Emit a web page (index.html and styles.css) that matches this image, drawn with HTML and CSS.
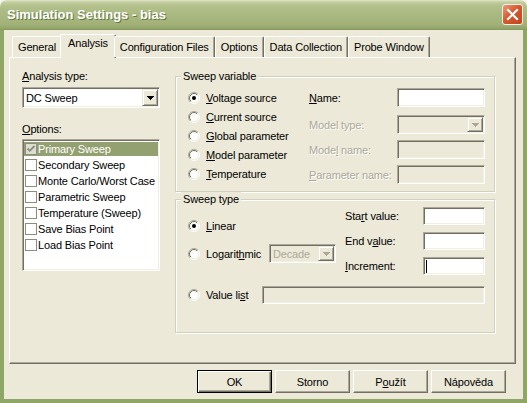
FILE: index.html
```html
<!DOCTYPE html>
<html>
<head>
<meta charset="utf-8">
<title>Simulation Settings - bias</title>
<link rel="stylesheet" href="styles.css">
</head>
<body>
<svg class="defs" width="0" height="0" aria-hidden="true">
  <defs>
    <linearGradient id="rOuter" x1="0" y1="0" x2="1" y2="1">
      <stop offset="0.5" stop-color="#aca899"/>
      <stop offset="0.5" stop-color="#ffffff"/>
    </linearGradient>
    <linearGradient id="rInner" x1="0" y1="0" x2="1" y2="1">
      <stop offset="0.5" stop-color="#716f64"/>
      <stop offset="0.5" stop-color="#f1efe2"/>
    </linearGradient>
  </defs>
</svg>
<div class="window">
  <div class="titlebar">
    <span class="title">Simulation Settings - bias</span>
    <span class="close"><svg width="13" height="13" viewBox="0 0 13 13"><path d="M2 2L11 11M11 2L2 11" stroke="#fff" stroke-width="2.2" stroke-linecap="square"/></svg></span>
  </div>
  <div class="frame">
    <div class="client">
      <div class="tabs">
        <span class="tab">General</span>
        <span class="tab active">Analysis</span>
        <span class="tab">Configuration Files</span>
        <span class="tab">Options</span>
        <span class="tab">Data Collection</span>
        <span class="tab">Probe Window</span>
      </div>
      <div class="panel">
        <div class="left">
          <div class="lbl"><u>A</u>nalysis type:</div>
          <div class="combo big">
            <span class="combo-text">DC Sweep</span>
            <span class="dd"><svg width="7" height="4" viewBox="0 0 7 4"><path d="M0 0h7v1h-1v1h-1v1h-1v1h-1v-1h-1v-1h-1v-1h-1z" fill="#000"/></svg></span>
          </div>
          <div class="lbl opt"><u>O</u>ptions:</div>
          <div class="list">
            <div class="item sel"><div class="inner"><span class="cb checked"><svg width="10" height="10" viewBox="0 0 10 10"><path d="M1.5 4.5L3.8 6.8L8.5 2" fill="none" stroke="#8d8b80" stroke-width="1.8"/></svg></span>Primary Sweep</div></div>
            <div class="item"><div class="inner"><span class="cb"></span>Secondary Sweep</div></div>
            <div class="item"><div class="inner"><span class="cb"></span>Monte Carlo/Worst Case</div></div>
            <div class="item"><div class="inner"><span class="cb"></span>Parametric Sweep</div></div>
            <div class="item"><div class="inner"><span class="cb"></span>Temperature (Sweep)</div></div>
            <div class="item"><div class="inner"><span class="cb"></span>Save Bias Point</div></div>
            <div class="item"><div class="inner"><span class="cb"></span>Load Bias Point</div></div>
          </div>
        </div>
        <div class="right">
          <fieldset class="group gv">
            <legend>Sweep variable</legend>
            <div class="gv-body">
              <div class="radios">
                <div class="radio-row"><svg class="radio" viewBox="0 0 12 12"><circle cx="6" cy="6" r="5.5" fill="none" stroke="url(#rOuter)"/><circle cx="6" cy="6" r="4.5" fill="#fff" stroke="url(#rInner)"/><circle cx="6" cy="6" r="2" fill="#000"/></svg><span><u>V</u>oltage source</span></div>
                <div class="radio-row"><svg class="radio" viewBox="0 0 12 12"><circle cx="6" cy="6" r="5.5" fill="none" stroke="url(#rOuter)"/><circle cx="6" cy="6" r="4.5" fill="#fff" stroke="url(#rInner)"/></svg><span><u>C</u>urrent source</span></div>
                <div class="radio-row"><svg class="radio" viewBox="0 0 12 12"><circle cx="6" cy="6" r="5.5" fill="none" stroke="url(#rOuter)"/><circle cx="6" cy="6" r="4.5" fill="#fff" stroke="url(#rInner)"/></svg><span><u>G</u>lobal parameter</span></div>
                <div class="radio-row"><svg class="radio" viewBox="0 0 12 12"><circle cx="6" cy="6" r="5.5" fill="none" stroke="url(#rOuter)"/><circle cx="6" cy="6" r="4.5" fill="#fff" stroke="url(#rInner)"/></svg><span><u>M</u>odel parameter</span></div>
                <div class="radio-row"><svg class="radio" viewBox="0 0 12 12"><circle cx="6" cy="6" r="5.5" fill="none" stroke="url(#rOuter)"/><circle cx="6" cy="6" r="4.5" fill="#fff" stroke="url(#rInner)"/></svg><span><u>T</u>emperature</span></div>
              </div>
              <div class="fields">
                <div class="frow first"><span class="flabel"><u>N</u>ame:</span><span class="tb"></span></div>
                <div class="frow"><span class="flabel dis">Model type:</span>
                  <span class="combo small disabled"><span class="combo-text"></span><span class="dd"><svg width="7" height="4" viewBox="0 0 7 4"><path d="M0 0h7v1h-1v1h-1v1h-1v1h-1v-1h-1v-1h-1v-1h-1z" fill="#aca899"/></svg></span></span>
                </div>
                <div class="frow"><span class="flabel dis">Mode<u>l</u> name:</span><span class="tb disabled"></span></div>
                <div class="frow"><span class="flabel dis"><u>P</u>arameter name:</span><span class="tb disabled"></span></div>
              </div>
            </div>
          </fieldset>
          <fieldset class="group gt">
            <legend>Sweep type</legend>
            <div class="gt-body">
              <div class="gt-left">
                <div class="radio-row lin"><svg class="radio" viewBox="0 0 12 12"><circle cx="6" cy="6" r="5.5" fill="none" stroke="url(#rOuter)"/><circle cx="6" cy="6" r="4.5" fill="#fff" stroke="url(#rInner)"/><circle cx="6" cy="6" r="2" fill="#000"/></svg><span><u>L</u>inear</span></div>
                <div class="radio-row log"><svg class="radio" viewBox="0 0 12 12"><circle cx="6" cy="6" r="5.5" fill="none" stroke="url(#rOuter)"/><circle cx="6" cy="6" r="4.5" fill="#fff" stroke="url(#rInner)"/></svg><span>Logarit<u>h</u>mic</span>
                  <span class="combo decade disabled"><span class="combo-text">Decade</span><span class="dd"><svg width="7" height="4" viewBox="0 0 7 4"><path d="M0 0h7v1h-1v1h-1v1h-1v1h-1v-1h-1v-1h-1v-1h-1z" fill="#aca899"/></svg></span></span>
                </div>
              </div>
              <div class="gt-right">
                <div class="vrow"><span class="vlabel">Sta<u>r</u>t value:</span><span class="tb short"></span></div>
                <div class="vrow"><span class="vlabel">End v<u>a</u>lue:</span><span class="tb short"></span></div>
                <div class="vrow"><span class="vlabel"><u>I</u>ncrement:</span><span class="tb short"><span class="caret"></span></span></div>
              </div>
              <div class="radio-row vl"><svg class="radio" viewBox="0 0 12 12"><circle cx="6" cy="6" r="5.5" fill="none" stroke="url(#rOuter)"/><circle cx="6" cy="6" r="4.5" fill="#fff" stroke="url(#rInner)"/></svg><span>Value li<u>s</u>t</span><span class="tb disabled wide"></span></div>
            </div>
          </fieldset>
        </div>
      </div>
      <div class="buttons">
        <span class="btn default">OK</span>
        <span class="btn">Storno</span>
        <span class="btn">P<u>o</u>užít</span>
        <span class="btn">Nápověda</span>
      </div>
    </div>
  </div>
</div>
</body>
</html>
```

FILE: styles.css
```css
html, body {
  margin: 0;
  padding: 0;
  background: #f4f3ee;
}
body {
  font-family: "Liberation Sans", Arial, sans-serif;
  font-size: 11px;
  letter-spacing: -0.15px;
  color: #000;
}
.defs {
  display: block;
  width: 0;
  height: 0;
  overflow: hidden;
}
u {
  text-underline-offset: 1px;
}
.window {
  width: 527px;
  height: 403px;
  display: flex;
  flex-direction: column;
  overflow: hidden;
}
.titlebar {
  height: 30px;
  flex: none;
  box-sizing: border-box;
  display: flex;
  align-items: center;
  padding: 0 4px 1px 7px;
  border-radius: 7px 7px 0 0;
  background: linear-gradient(#e2e8cb 0, #c4cfa0 2px, #b2c08b 6px, #a9b880 16px, #a0b076 25px, #90a267 29px, #7f9357 30px);
}
.title {
  font-weight: bold;
  font-size: 13px;
  letter-spacing: 0;
  color: #fff;
  text-shadow: 1px 1px 0 #66773f;
}
.close {
  margin-left: auto;
  width: 21px;
  height: 21px;
  box-sizing: border-box;
  border: 1px solid #f4f0e8;
  border-radius: 3px;
  background: linear-gradient(135deg, #ec9a78 0, #d65a30 45%, #c0441c 100%);
  display: flex;
  align-items: center;
  justify-content: center;
}
.frame {
  flex: 1;
  display: flex;
  border: solid #8fa766;
  border-width: 0 4px 4px;
}
.client {
  flex: 1;
  display: flex;
  flex-direction: column;
  padding: 4px 7px 5px 5px;
  background: #ece9d8;
}

/* tabs */
.tabs {
  height: 23px;
  display: flex;
  align-items: flex-end;
  padding-left: 3px;
  position: relative;
  z-index: 1;
}
.tab {
  height: 21px;
  box-sizing: border-box;
  display: flex;
  align-items: center;
  padding: 0 5px;
  line-height: 13px;
  border: 1px solid;
  border-color: #fff #716f64 transparent #fff;
  border-bottom: 0;
  border-radius: 2px 2px 0 0;
  box-shadow: inset -1px 0 0 #aca899;
  background: #ece9d8;
}
.tab.active {
  height: 24px;
  margin: 0 -2px -1px;
  padding: 2px 7px 0;
  align-items: flex-start;
}

/* panel */
.panel {
  height: 307px;
  flex: none;
  box-sizing: border-box;
  border: 1px solid;
  border-color: #fff #716f64 #716f64 #fff;
  box-shadow: inset -1px -1px 0 #aca899;
  padding: 11px 0 0 12px;
  display: flex;
  gap: 15px;
}
.left {
  width: 138px;
  flex: none;
}
.right {
  width: 320px;
  flex: none;
}
.lbl {
  line-height: 14px;
  height: 14px;
}
.lbl.opt {
  margin-top: 14px;
}

/* sunken boxes */
.tb, .combo, .list {
  box-sizing: border-box;
  border: 1px solid;
  border-color: #aca899 #fff #fff #aca899;
  box-shadow: inset 1px 1px 0 #716f64, inset -1px -1px 0 #f1efe2;
  background: #fff;
}
.tb {
  display: block;
  width: 88px;
  height: 19px;
  flex: none;
}
.tb.disabled {
  background: #ece9d8;
}
.tb.short {
  width: 62px;
  height: 18px;
}
.tb.wide {
  width: 223px;
  height: 18px;
  margin-left: auto;
}
.caret {
  display: block;
  width: 1px;
  height: 13px;
  margin: 2px 0 0 2px;
  background: #000;
}
.combo {
  display: flex;
  align-items: stretch;
  padding: 1px;
}
.combo.big {
  margin-top: 4px;
  height: 21px;
}
.combo.small {
  width: 88px;
  height: 19px;
}
.combo.disabled {
  background: #ece9d8;
  color: #aca899;
}
.combo.decade {
  width: 67px;
  height: 19px;
  margin-left: auto;
  margin-right: 9px;
}
.combo-text {
  flex: 1;
  display: flex;
  align-items: center;
  padding-left: 2px;
}
.dd {
  width: 16px;
  flex: none;
  box-sizing: border-box;
  border: 1px solid;
  border-color: #ece9d8 #716f64 #716f64 #ece9d8;
  box-shadow: inset 1px 1px 0 #fff, inset -1px -1px 0 #aca899;
  background: #ece9d8;
  display: flex;
  align-items: center;
  justify-content: center;
}
.dd svg {
  display: block;
}

/* list */
.list {
  margin-top: 3px;
  height: 132px;
  padding: 1px;
}
.item {
  height: 16px;
  box-sizing: border-box;
  padding: 1px 0;
}
.item .inner {
  height: 14px;
  display: flex;
  align-items: center;
  white-space: nowrap;
}
.item.sel .inner {
  background: #93a070;
  color: #fff;
}
.cb {
  width: 12px;
  height: 12px;
  flex: none;
  box-sizing: border-box;
  border: 1px solid #8e8c7f;
  background: #fff;
  margin: 0 1px 0 1px;
  display: flex;
  align-items: center;
  justify-content: center;
}
.cb.checked {
  background: #dcdecf;
}
.cb svg {
  display: block;
}

/* group boxes */
fieldset.group {
  margin: 0;
  min-width: 0;
  border: 1px solid #d0d0bf;
  box-shadow: inset 1px 1px 0 #fff, 1px 1px 0 #fff;
}
fieldset.group legend {
  margin-left: -7px;
  padding: 0 2px;
  line-height: 14px;
  background: #ece9d8;
}
.gv {
  padding: 5px 9px 7px 12px;
}
.gt {
  margin-top: 11px;
  padding: 1px 9px 28px 12px;
}
.gv-body {
  display: flex;
}
.radios {
  width: 121px;
  flex: none;
}
.radio-row {
  height: 19px;
  display: flex;
  align-items: center;
  white-space: nowrap;
}
.radio {
  width: 12px;
  height: 12px;
  flex: none;
  margin-right: 6px;
  display: block;
}
.fields {
  flex: 1;
}
.frow {
  height: 19px;
  display: flex;
  align-items: center;
  margin-bottom: 6px;
}
.frow.first {
  margin-bottom: 8px;
}
.frow:last-child {
  margin-bottom: 0;
}
.flabel {
  width: 88px;
  flex: none;
  white-space: nowrap;
}
.dis {
  color: #aca899;
  text-shadow: 1px 1px 0 #fff;
}

.gt-body {
  display: grid;
  grid-template-columns: 157px 140px;
}
.radio-row.lin {
  margin-top: 9px;
}
.radio-row.log {
  margin-top: 9px;
}
.vrow {
  height: 18px;
  display: flex;
  align-items: center;
  margin-bottom: 7px;
}
.vrow:last-child {
  margin-bottom: 0;
}
.vlabel {
  width: 78px;
  flex: none;
  white-space: nowrap;
}
.radio-row.vl {
  grid-column: 1 / span 2;
  margin-top: 11px;
  height: 18px;
}

/* buttons */
.buttons {
  height: 24px;
  margin-top: 6px;
  padding-right: 10px;
  display: flex;
  justify-content: flex-end;
  align-items: flex-start;
  gap: 3px;
}
.btn {
  width: 75px;
  height: 23px;
  box-sizing: border-box;
  display: flex;
  align-items: center;
  justify-content: center;
  border: 1px solid;
  border-color: #fff #716f64 #716f64 #fff;
  box-shadow: inset -1px -1px 0 #aca899;
  background: #ece9d8;
}
.btn.default {
  border-color: #000;
  box-shadow: inset 1px 1px 0 #fff, inset -1px -1px 0 #716f64, inset -2px -2px 0 #aca899;
}
```
